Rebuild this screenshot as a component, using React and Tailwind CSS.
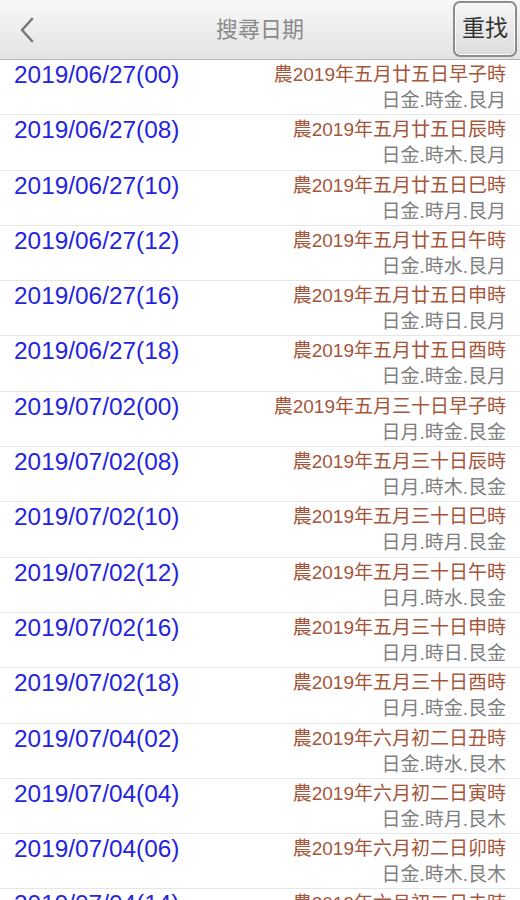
import React from 'react';

const rows = [
  ['2019/06/27(00)', '農2019年五月廿五日早子時', '日金.時金.艮月'],
  ['2019/06/27(08)', '農2019年五月廿五日辰時', '日金.時木.艮月'],
  ['2019/06/27(10)', '農2019年五月廿五日巳時', '日金.時月.艮月'],
  ['2019/06/27(12)', '農2019年五月廿五日午時', '日金.時水.艮月'],
  ['2019/06/27(16)', '農2019年五月廿五日申時', '日金.時日.艮月'],
  ['2019/06/27(18)', '農2019年五月廿五日酉時', '日金.時金.艮月'],
  ['2019/07/02(00)', '農2019年五月三十日早子時', '日月.時金.艮金'],
  ['2019/07/02(08)', '農2019年五月三十日辰時', '日月.時木.艮金'],
  ['2019/07/02(10)', '農2019年五月三十日巳時', '日月.時月.艮金'],
  ['2019/07/02(12)', '農2019年五月三十日午時', '日月.時水.艮金'],
  ['2019/07/02(16)', '農2019年五月三十日申時', '日月.時日.艮金'],
  ['2019/07/02(18)', '農2019年五月三十日酉時', '日月.時金.艮金'],
  ['2019/07/04(02)', '農2019年六月初二日丑時', '日金.時水.艮木'],
  ['2019/07/04(04)', '農2019年六月初二日寅時', '日金.時月.艮木'],
  ['2019/07/04(06)', '農2019年六月初二日卯時', '日金.時木.艮木'],
  ['2019/07/04(14)', '農2019年六月初二日未時', '日金.時水.艮木'],
];

const font = { fontFamily: '"Liberation Sans", "Noto Sans CJK TC", sans-serif' };

export default function App() {
  return (
    <div className="w-[520px] h-[900px] overflow-hidden bg-white" style={font}>
      <div className="h-[60px] flex items-center justify-between bg-gradient-to-b from-[#f8f8f8] to-[#e3e3e3] border-b border-[#b5b5b5] relative">
        <button className="w-[56px] h-full flex items-center justify-center">
          <svg width="16" height="26" viewBox="0 0 16 26" className="ml-[-2px]">
            <polyline points="13,2 3,13 13,24" fill="none" stroke="#777" strokeWidth="2.6" strokeLinecap="round" strokeLinejoin="round" />
          </svg>
        </button>
        <div className="absolute left-0 right-0 text-center text-[22px] text-[#8a8a8a] pointer-events-none">搜尋日期</div>
        <button className="mr-[3px] mt-[-2px] w-[64px] h-[56px] rounded-[7px] border-2 border-[#8c8c8c] bg-gradient-to-b from-[#f6f6f6] to-[#dcdcdc] shadow-[inset_0_0_0_1px_#fbfbfb] text-[23px] text-[#333] flex items-center justify-center">
          重找
        </button>
      </div>
      <div>
        {rows.map(([date, lunar, elem]) => (
          <div key={date} className="h-[55.3px] border-b border-[#e6e6e6] flex justify-between pt-[2px] px-[14px]">
            <div className="text-[24.4px] leading-[26px] text-[#2424e0]">{date}</div>
            <div className="flex flex-col items-end text-[19px] leading-[26px]">
              <div className="text-[#a5553a]">{lunar}</div>
              <div className="text-[#808080]">{elem}</div>
            </div>
          </div>
        ))}
      </div>
    </div>
  );
}
